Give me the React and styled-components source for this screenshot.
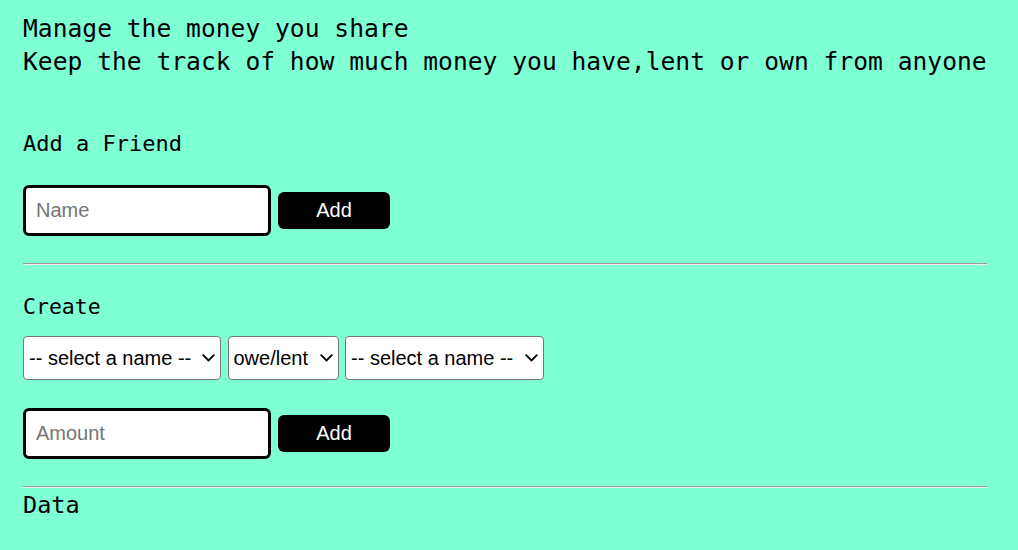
import React from "react";
import styled, { createGlobalStyle } from "styled-components";

const Global = createGlobalStyle`
  html, body { margin: 0; padding: 0; background: #7fffd4; }
  body { font-family: "DejaVu Sans Mono", "Liberation Mono", monospace; color: #000; }
`;

const Page = styled.main`
  width: fit-content;
  padding: 12px 0 0 23px;
`;

const Hero = styled.header`
  font-size: 24.63px;
  line-height: 33px;
  white-space: nowrap;
`;

const HeroLine = styled.div``;

const Section = styled.section`
  display: flex;
  flex-direction: column;
  align-items: flex-start;
`;

const Title = styled.h3`
  margin: ${(p) => p.$top}px 0 0 0;
  font-weight: normal;
  font-size: ${(p) => p.$size}px;
  line-height: 26px;
`;

const Row = styled.div`
  display: flex;
  align-items: center;
  gap: ${(p) => p.$gap ?? 7}px;
  margin-top: ${(p) => p.$top}px;
`;

const TextInput = styled.input`
  box-sizing: border-box;
  width: 248px;
  height: 51px;
  border: 3px solid #000;
  border-radius: 6px;
  background: #fff;
  padding: 0 10px;
  font-family: "Liberation Sans", Arial, sans-serif;
  font-size: 20px;
  color: #000;
  outline: none;
  &::placeholder { color: #757575; }
`;

const Button = styled.button`
  box-sizing: border-box;
  width: 112px;
  height: 37px;
  border: none;
  border-radius: 6px;
  background: #000;
  color: #fff;
  font-family: "Liberation Sans", Arial, sans-serif;
  font-size: 20px;
  cursor: pointer;
`;

const SelectWrap = styled.div`
  position: relative;
  display: flex;
`;

const Select = styled.select`
  appearance: none;
  -webkit-appearance: none;
  box-sizing: border-box;
  width: ${(p) => p.$w}px;
  height: 44px;
  border: 1px solid #767676;
  border-radius: 4px;
  background: #fff;
  color: #000;
  font-family: "Liberation Sans", Arial, sans-serif;
  font-size: 20px;
  padding: 0 22px 0 5px;
  outline: none;
`;

const Chevron = styled.svg`
  position: absolute;
  right: 6px;
  top: 50%;
  width: 13px;
  height: 8px;
  margin-top: -4px;
  pointer-events: none;
`;

const Rule = styled.hr`
  width: 100%;
  box-sizing: border-box;
  margin: ${(p) => p.$top}px 0 0 0;
  height: 0;
  border: none;
  border-top: 1px solid #9a9a9a;
  border-bottom: 1px solid #eeeeee;
`;

function NameSelect({ w, label }) {
  return (
    <SelectWrap>
      <Select $w={w} defaultValue="">
        <option value="">{label}</option>
      </Select>
      <Chevron viewBox="0 0 13 8" fill="none">
        <path d="M1.2 1.2 L6.5 6.5 L11.8 1.2" stroke="#000" strokeWidth="1.8" strokeLinecap="round" strokeLinejoin="round" />
      </Chevron>
    </SelectWrap>
  );
}

export default function App() {
  return (
    <>
      <Global />
      <Page>
        <Hero>
          <HeroLine>Manage the money you share</HeroLine>
          <HeroLine>Keep the track of how much money you have,lent or own from anyone</HeroLine>
        </Hero>
        <Section>
          <Title $top={53} $size={22}>Add a Friend</Title>
          <Row $top={28}>
            <TextInput placeholder="Name" />
            <Button>Add</Button>
          </Row>
        </Section>
        <Rule $top={27} />
        <Section>
          <Title $top={29} $size={21.5}>Create</Title>
          <Row $top={16} $gap={6.5}>
            <NameSelect w={198} label="-- select a name --" />
            <NameSelect w={111} label="owe/lent" />
            <NameSelect w={199} label="-- select a name --" />
          </Row>
          <Row $top={28}>
            <TextInput placeholder="Amount" />
            <Button>Add</Button>
          </Row>
        </Section>
        <Rule $top={27} />
        <Section>
          <Title $top={4} $size={23.5}>Data</Title>
        </Section>
      </Page>
    </>
  );
}
